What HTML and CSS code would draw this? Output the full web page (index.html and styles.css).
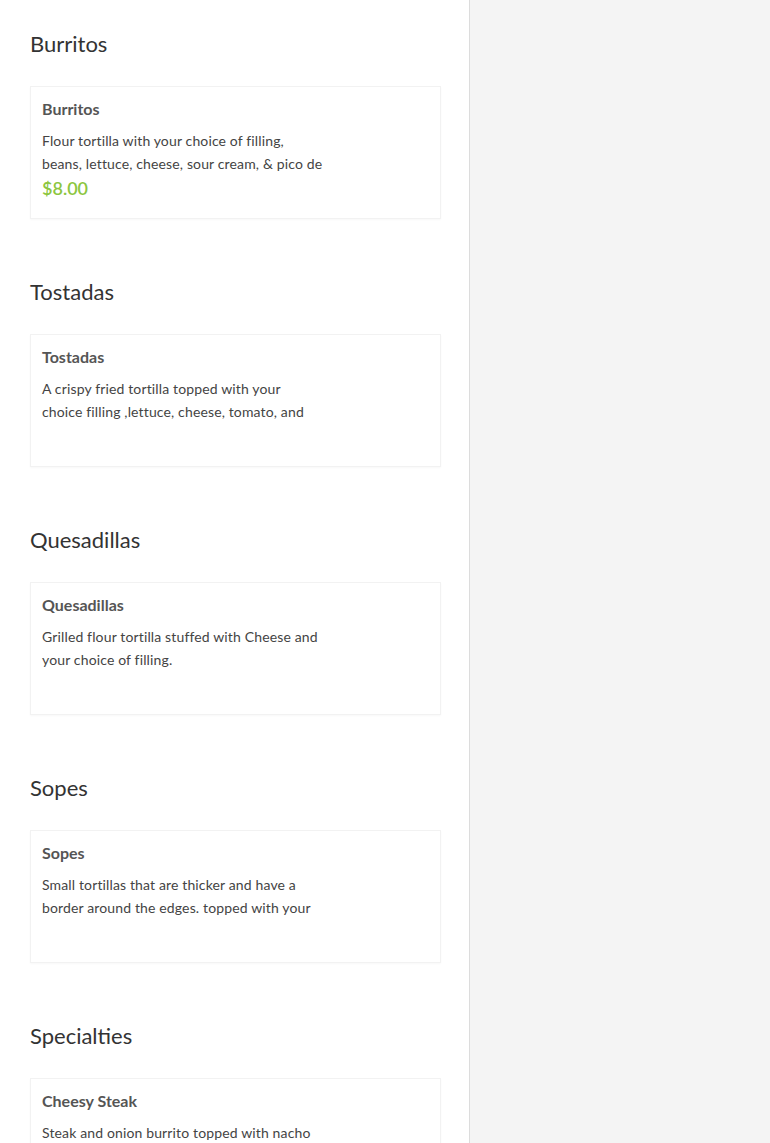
FILE: index.html
```html
<!DOCTYPE html>
<html>
<head>
<meta charset="utf-8">
<link rel="stylesheet" href="styles.css">
</head>
<body>
<div class="layout">
  <main class="menu">
    <section class="category">
      <h2 class="cat-title">Burritos</h2>
      <div class="card">
        <div class="item-name">Burritos</div>
        <div class="item-desc"><span class="line">Flour tortilla with your choice of filling,</span><span class="line">beans, lettuce, cheese, sour cream, &amp; pico de</span></div>
        <div class="item-price">$8.00</div>
      </div>
    </section>
    <section class="category">
      <h2 class="cat-title">Tostadas</h2>
      <div class="card">
        <div class="item-name">Tostadas</div>
        <div class="item-desc"><span class="line">A crispy fried tortilla topped with your</span><span class="line">choice filling ,lettuce, cheese, tomato, and</span></div>
      </div>
    </section>
    <section class="category">
      <h2 class="cat-title">Quesadillas</h2>
      <div class="card">
        <div class="item-name">Quesadillas</div>
        <div class="item-desc"><span class="line">Grilled flour tortilla stuffed with Cheese and</span><span class="line">your choice of filling.</span></div>
      </div>
    </section>
    <section class="category">
      <h2 class="cat-title">Sopes</h2>
      <div class="card">
        <div class="item-name">Sopes</div>
        <div class="item-desc"><span class="line">Small tortillas that are thicker and have a</span><span class="line">border around the edges. topped with your</span></div>
      </div>
    </section>
    <section class="category">
      <h2 class="cat-title">Specialties</h2>
      <div class="card">
        <div class="item-name">Cheesy Steak</div>
        <div class="item-desc"><span class="line">Steak and onion burrito topped with nacho</span></div>
      </div>
    </section>
  </main>
  <aside class="side"></aside>
</div>
</body>
</html>
```
FILE: styles.css
```css
html, body {
  margin: 0;
  padding: 0;
  height: 100%;
}
body {
  font-family: "Lato", "Noto Sans", sans-serif;
  color: #444;
  overflow: hidden;
}
.layout {
  display: flex;
  height: 1143px;
}
.menu {
  width: 470px;
  box-sizing: border-box;
  padding: 0 28px 0 30px;
  background: #fff;
  border-right: 1px solid #dcdcdc;
  overflow: hidden;
}
.side {
  flex: 1;
  background: #f4f4f4;
}
.category {
  padding-top: 30px;
  padding-bottom: 29px;
}
.cat-title {
  margin: 0;
  font-size: 22px;
  font-weight: 400;
  color: #333;
  line-height: 28px;
  height: 28px;
}
.card {
  margin-top: 28px;
  height: 133px;
  box-sizing: border-box;
  border: 1px solid #f2f2f2;
  box-shadow: 0 1px 2px rgba(0,0,0,0.03);
  padding: 12px 12px 0 11px;
}
.item-name {
  font-size: 16px;
  font-weight: 700;
  color: #555;
  line-height: 20px;
}
.item-desc {
  margin-top: 10px;
  font-size: 14px;
  letter-spacing: 0.14px;
  line-height: 23px;
  color: #444;
}
.line {
  display: block;
  white-space: nowrap;
}
.item-price {
  font-size: 18px;
  font-weight: 600;
  color: #8cc63f;
  line-height: 24px;
  margin-top: 1px;
}
```
